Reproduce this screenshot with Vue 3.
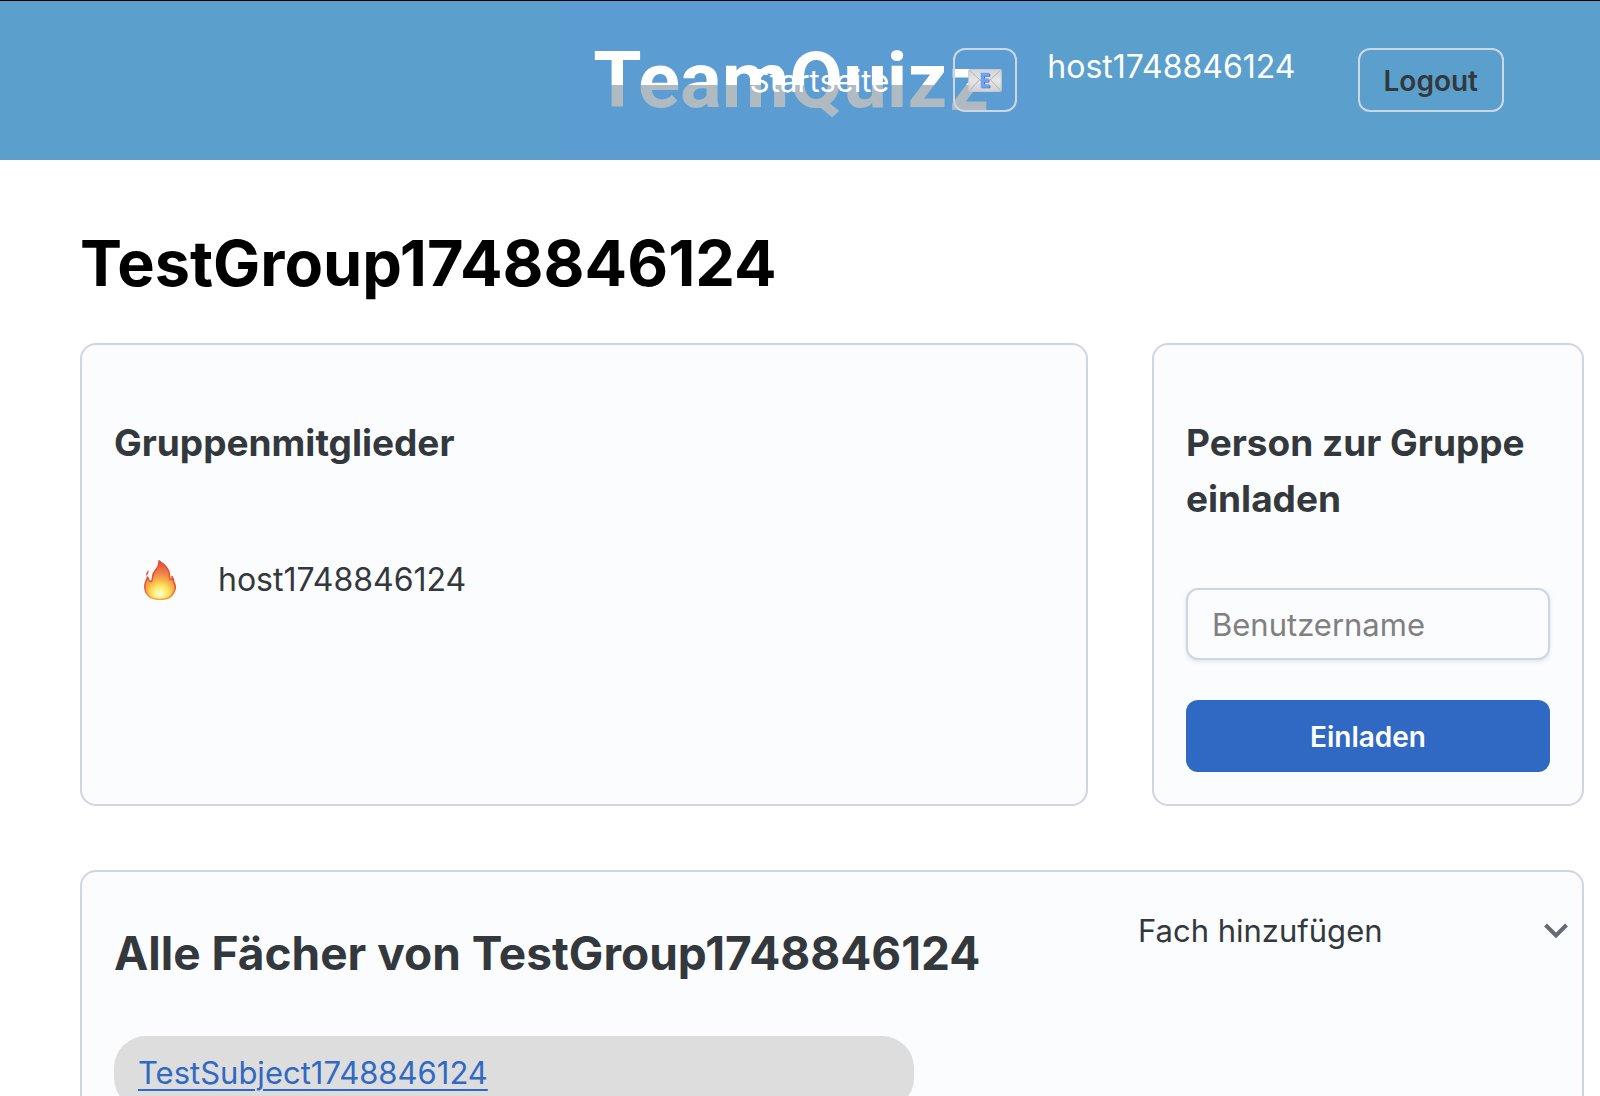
<script setup>
import { ref } from 'vue'

const user = 'host1748846124'
const group = 'TestGroup1748846124'
const members = [user]
const subjects = ['TestSubject1748846124']
const invitee = ref('')
</script>

<template>
  <div class="page">
    <header class="topbar">
      <div class="logo" aria-label="TeamQuizz">
        <span class="logo-word">TeamQuiz</span><span class="logo-word logo-drop">z</span>
      </div>
      <nav class="nav">
        <a class="home" href="#">Startseite</a>
        <button class="outline mail" type="button" aria-label="Einladungen">
          <svg width="34" height="23" viewBox="0 0 35 24" aria-hidden="true">
            <defs>
              <linearGradient id="paper" x1="0" y1="0" x2="0" y2="1">
                <stop offset="0" stop-color="#d3d4d6" />
                <stop offset="0.5" stop-color="#e6e6e7" />
                <stop offset="1" stop-color="#cfd0d2" />
              </linearGradient>
            </defs>
            <rect x="0.5" y="0.5" width="34" height="23" rx="1" fill="url(#paper)" stroke="#c9cbce" />
            <path d="M1 1 14 13Q17.500 15.500 21 13L34 1M1 23 12 11M34 23 23 11" fill="none" stroke="#b0b2b5" stroke-width="1" />
            <path d="M14 5H23V8H17.500V11H22V14H17.500V17H23V20H14Z" fill="#4a70a8" />
            <path d="M13 4H22V7.500H16.500V10H21.500V13.500H16.500V16H22V19.500H13Z" fill="#6da2f5" />
          </svg>
        </button>
        <span class="user">{{ user }}</span>
        <button class="outline logout" type="button">Logout</button>
      </nav>
    </header>

    <main class="content">
      <h1>{{ group }}</h1>

      <div class="columns">
        <section class="card">
          <h2>Gruppenmitglieder</h2>
          <ul class="members">
            <li v-for="m in members" :key="m">
              <svg width="32" height="40" viewBox="0 0 32 40" aria-hidden="true">
                <defs>
                  <radialGradient id="flame" gradientUnits="userSpaceOnUse" cx="16" cy="33" r="31">
                    <stop offset="0" stop-color="#fffbd0" />
                    <stop offset="0.2" stop-color="#fde760" />
                    <stop offset="0.4" stop-color="#f9b94c" />
                    <stop offset="0.65" stop-color="#ee8148" />
                    <stop offset="1" stop-color="#e4503a" />
                  </radialGradient>
                  <linearGradient id="rim" x1="0" y1="0" x2="0" y2="1">
                    <stop offset="0" stop-color="#e44a35" />
                    <stop offset="0.7" stop-color="#e8502f" />
                    <stop offset="1" stop-color="#f4a53a" />
                  </linearGradient>
                  <radialGradient id="core" gradientUnits="userSpaceOnUse" cx="16" cy="34" r="14">
                    <stop offset="0" stop-color="#fffde4" />
                    <stop offset="0.4" stop-color="#fff27a" />
                    <stop offset="1" stop-color="#fad04a" stop-opacity="0" />
                  </radialGradient>
                </defs>
                <path d="M15 0.800C20 4 25.500 9 25.500 15C25.500 18 26 20.500 27.500 19.500C28.500 18.500 28 16.800 28 16.500C30 19 29.500 22 30.300 23.500C31.800 26 31 30 30 32L28.500 34.500C26 38.500 20 39.500 15 39.300C10 39.300 5 37.500 3 34C0.500 31 0.500 25 1.500 22.500C2.500 20 3 18.500 3.500 17C4.500 19.500 5 21.500 6.500 21.500C8.500 21.500 8.500 18 8.800 15.500C9.500 10 16 8 15 0.800Z" fill="url(#flame)" stroke="url(#rim)" stroke-width="1.500" stroke-linejoin="round" />
                <path d="M16 16C13 21 11 26 7 25C3 29 4 37 15 38.500C25 38.500 30 33 28 26C25 27 22 24 21 18C20 23 17 23 16 16Z" fill="url(#core)" />
                <path d="M4.800 10Q1.500 12 2.200 16Q4.800 14 4.800 10Z" fill="#e65a3c" />
              </svg>
              <span>{{ m }}</span>
            </li>
          </ul>
        </section>

        <section class="card">
          <h2>Person zur Gruppe einladen</h2>
          <form class="invite" @submit.prevent>
            <input v-model="invitee" type="text" placeholder="Benutzername" aria-label="Benutzername" />
            <button class="primary" type="submit">Einladen</button>
          </form>
        </section>
      </div>

      <section class="card subjects">
        <div class="subject-list">
          <h2 class="large">Alle Fächer von {{ group }}</h2>
          <ul>
            <li v-for="s in subjects" :key="s" class="subject"><a href="#">{{ s }}</a></li>
          </ul>
        </div>
        <details class="add">
          <summary>
            Fach hinzufügen
            <svg width="24" height="16" viewBox="0 0 24 16" aria-hidden="true">
              <path d="M1.500 2 12 12.500 22.500 2" fill="none" stroke="#646b75" stroke-width="4" />
            </svg>
          </summary>
        </details>
      </section>
    </main>
  </div>
</template>

<style>
html {
  scrollbar-width: none;
}
body {
  margin: 0;
  background: #fff;
}
</style>

<style scoped>
.page {
  font-family: Inter, "Liberation Sans", sans-serif;
  font-size: 31px;
  line-height: 48px;
  color: #33383d;
}
.page * {
  box-sizing: border-box;
}
ul {
  margin: 0;
  padding: 0;
  list-style: none;
}
button,
input {
  font-family: inherit;
  margin: 0;
}

.topbar {
  display: grid;
  height: 160px;
  border-top: 1px solid #000;
  background: #5b9fcc;
}
.logo,
.nav {
  grid-area: 1 / 1;
}
.logo {
  justify-self: center;
  display: flex;
  justify-content: center;
  gap: 2px;
  width: 480px;
  padding: 33px 18px 0 0;
  background: #5b9dd3;
  font-family: Roboto, Inter, sans-serif;
  font-size: 78px;
  font-weight: 700;
  line-height: 94px;
}
.logo-word {
  height: 94px;
  color: transparent;
  background: linear-gradient(#fff 51px, #afbac1 51px);
  background-clip: text;
  -webkit-background-clip: text;
}
.logo-drop {
  margin-top: 3px;
  background-image: linear-gradient(#fff 48px, #afbac1 48px);
}
.nav {
  z-index: 1;
  display: flex;
  justify-content: flex-end;
  align-items: flex-start;
  padding: 47px 96px 0 0;
  color: #fff;
}
.home {
  margin-right: 64px;
  color: #fff;
  line-height: 66px;
  text-decoration: none;
}
.user {
  margin: 0 62px 0 30px;
  font-size: 32px;
  line-height: 38px;
}
.outline {
  height: 64px;
  border: 2px solid #cfd6e2;
  border-radius: 12px;
  background: transparent;
  color: #33383d;
  font-size: 28px;
  font-weight: 600;
  line-height: 32px;
}
.mail {
  display: flex;
  align-items: center;
  justify-content: center;
  width: 64px;
  padding: 0;
}
.logout {
  padding: 2px 24px 0;
}

.content {
  padding: 67px 16px 64px 80px;
}
h1 {
  margin: 0 0 44px;
  color: #000;
  font-size: 63px;
  font-weight: 700;
  line-height: 72px;
}
.columns {
  display: grid;
  grid-template-columns: 7fr 3fr;
  gap: 64px;
  margin-bottom: 64px;
}
.card {
  padding: 32px;
  border: 2px solid #cfd6e2;
  border-radius: 16px;
  background: #fbfcfe;
}
h2 {
  margin: 38px 0 61px;
  font-size: 37px;
  font-weight: 700;
  line-height: 56px;
}
.members li {
  display: flex;
  align-items: center;
  gap: 42px;
  padding: 24px 30px;
  font-size: 32px;
}
.invite {
  display: grid;
  gap: 40px;
}
.invite input {
  width: 100%;
  height: 72px;
  padding: 0 24px;
  border: 2px solid #cfd6e2;
  border-radius: 12px;
  background: #fbfcfe;
  box-shadow: 0 2px 4px rgba(129, 145, 181, 0.2);
  color: #33383d;
  font-size: 31px;
}
.invite input::placeholder {
  color: #808080;
  opacity: 1;
}
.primary {
  height: 72px;
  padding: 2px 24px 0;
  border: 0;
  border-radius: 12px;
  background: #2f69c4;
  color: #fff;
  font-size: 28px;
  font-weight: 600;
}

.subjects {
  display: flex;
  justify-content: space-between;
  padding-right: 14px;
}
.large {
  margin: 13px 0 47px;
  font-size: 46px;
  line-height: 72px;
}
.subject {
  max-width: 800px;
  padding: 13px 24px;
  border-radius: 32px;
  background: #ddd;
}
.subject a {
  color: #2f69c4;
  text-decoration-thickness: 2px;
  text-underline-offset: 5px;
}
.add {
  width: 430px;
}
summary {
  display: flex;
  align-items: center;
  justify-content: space-between;
  line-height: 54px;
  list-style: none;
}
</style>
